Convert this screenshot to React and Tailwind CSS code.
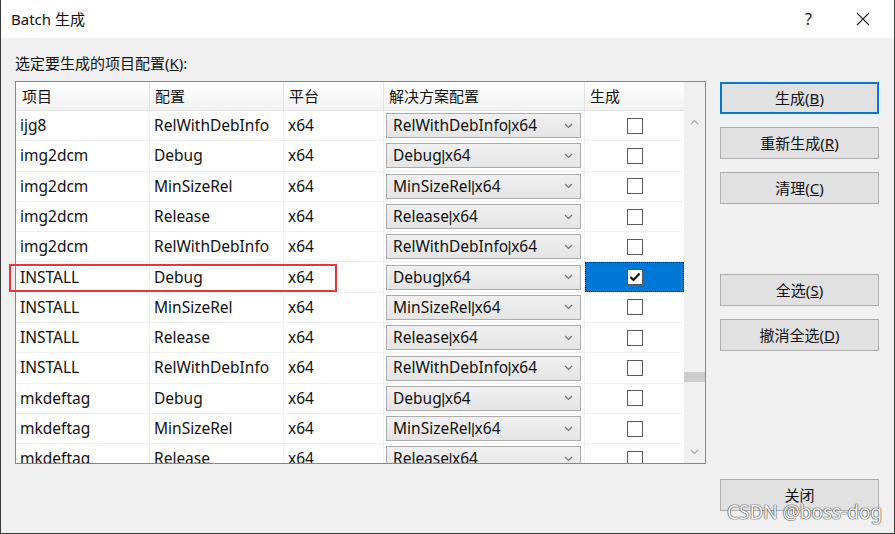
import React from "react";

const rows = [
  ["ijg8", "RelWithDebInfo"],
  ["img2dcm", "Debug"],
  ["img2dcm", "MinSizeRel"],
  ["img2dcm", "Release"],
  ["img2dcm", "RelWithDebInfo"],
  ["INSTALL", "Debug", true],
  ["INSTALL", "MinSizeRel"],
  ["INSTALL", "Release"],
  ["INSTALL", "RelWithDebInfo"],
  ["mkdeftag", "Debug"],
  ["mkdeftag", "MinSizeRel"],
  ["mkdeftag", "Release"],
];

const font = { fontFamily: '"Noto Sans", "Noto Sans CJK SC", sans-serif' };

function Chevron({ down = true, className = "" }) {
  return (
    <svg width="9" height="6" viewBox="0 0 9 6" className={className}>
      <path
        d={down ? "M1 1 L4.5 4.5 L8 1" : "M1 5 L4.5 1.5 L8 5"}
        fill="none"
        stroke="currentColor"
        strokeWidth="1.1"
      />
    </svg>
  );
}

function Checkbox({ checked }) {
  return (
    <div className="w-[16px] h-[16px] bg-white border border-[#5a5a5a] flex items-center justify-center">
      {checked && (
        <svg width="12" height="10" viewBox="0 0 12 10">
          <path d="M1.5 5 L4.5 8 L10.5 1.5" fill="none" stroke="#111" strokeWidth="2.2" />
        </svg>
      )}
    </div>
  );
}

function Btn({ children, primary, className = "" }) {
  return (
    <div
      className={
        "h-[32px] w-[159px] flex items-center justify-center bg-[#e1e1e1] text-[15px] text-[#111] " +
        (primary ? "border-2 border-[#0078d7] " : "border border-[#adadad] ") +
        className
      }
    >
      {children}
    </div>
  );
}

export default function App() {
  return (
    <div
      className="w-[895px] h-[534px] flex flex-col border-l border-r border-b border-[#3a3a3a] overflow-hidden relative"
      style={font}
    >
      {/* title bar */}
      <div className="h-[38px] bg-white flex items-center shrink-0">
        <span className="ml-[10px] text-[15px] text-[#111]">Batch 生成</span>
        <span className="ml-auto mr-[44px] text-[16px] text-[#222]">?</span>
        <svg width="14" height="14" viewBox="0 0 14 14" className="mr-[24px]">
          <path d="M1 1 L13 13 M13 1 L1 13" stroke="#222" strokeWidth="1.1" />
        </svg>
      </div>

      {/* body */}
      <div className="flex-1 bg-[#f0f0f0] pt-[14px] pl-[14px] relative">
        <div className="h-[22px] leading-[22px] text-[15px] text-[#111]">
          选定要生成的项目配置(<span className="underline">K</span>):
        </div>
        <div className="flex items-start mt-[7px]">
          {/* grid */}
          <div className="w-[691px] h-[383px] border border-[#828790] bg-white flex overflow-hidden">
            <div className="w-[668px] flex flex-col">
              <div className="h-[29px] shrink-0 flex bg-gradient-to-b from-white to-[#f2f2f2] border-b border-[#e3e3e3] text-[15px] text-[#111]">
                <div className="w-[134px] pl-[6px] border-r border-[#e3e3e3] flex items-center">项目</div>
                <div className="w-[134px] pl-[5px] border-r border-[#e3e3e3] flex items-center">配置</div>
                <div className="w-[100px] pl-[5px] border-r border-[#e3e3e3] flex items-center">平台</div>
                <div className="w-[201px] pl-[5px] border-r border-[#e3e3e3] flex items-center">解决方案配置</div>
                <div className="w-[99px] pl-[5px] flex items-center">生成</div>
              </div>
              {rows.map(([p, c, sel], i) => (
                <div key={i} className="h-[30.3px] shrink-0 flex border-b border-[#f0f0f0] text-[15.5px] text-[#111]">
                  <div className="w-[134px] pl-[4px] border-r border-[#f0f0f0] flex items-center">{p}</div>
                  <div className="w-[134px] pl-[4px] border-r border-[#f0f0f0] flex items-center">{c}</div>
                  <div className="w-[100px] pl-[4px] border-r border-[#f0f0f0] flex items-center">x64</div>
                  <div className="w-[201px] pl-[2px] border-r border-[#f0f0f0] flex items-center">
                    <div className="w-[195px] h-[25px] border border-[#acacac] bg-gradient-to-b from-[#f0f0f0] to-[#e5e5e5] flex items-center pl-[6px] pr-[7px]">
                      <span>
                        {c}
                        <span className="font-['Liberation_Sans'] mx-[-0.5px]">|</span>
                        x64
                      </span>
                      <Chevron className="ml-auto text-[#707070]" />
                    </div>
                  </div>
                  <div
                    className={
                      "w-[99px] flex items-center justify-center " +
                      (sel ? "bg-[#0078d7] outline-1 outline-dotted outline-black -outline-offset-1" : "")
                    }
                  >
                    <Checkbox checked={sel} />
                  </div>
                </div>
              ))}
            </div>
            {/* scrollbar */}
            <div className="w-[21px] bg-[#f0f0f0] flex flex-col items-center relative text-[#a8a8a8]">
              <Chevron down={false} className="mt-[37px]" />
              <div className="mt-[247px] w-[21px] h-[10px] bg-[#cdcdcd]" />
              <Chevron className="mt-auto mb-[8px]" />
            </div>
          </div>

          {/* buttons */}
          <div className="ml-[14px] pt-[1px] flex flex-col">
            <Btn primary>生成(<span className="underline">B</span>)</Btn>
            <Btn className="mt-[13px]">重新生成(<span className="underline">R</span>)</Btn>
            <Btn className="mt-[13px]">清理(<span className="underline">C</span>)</Btn>
            <Btn className="mt-[70px]">全选(<span className="underline">S</span>)</Btn>
            <Btn className="mt-[13px]">撤消全选(<span className="underline">D</span>)</Btn>
            <Btn className="mt-[128px]">关闭</Btn>
          </div>
        </div>

        {/* red annotation box */}
        <div className="absolute left-[8px] top-[226px] w-[328px] h-[28px] border-2 border-[#e8353b]" />

        {/* watermark */}
        <div className="absolute left-[726px] top-[462px] text-[19px] leading-[24px] text-[#f4f4f4] [text-shadow:0_0_1px_#444,0_0_1px_#444,0_0_1px_#444]">
          CSDN @boss-dog
        </div>
      </div>
    </div>
  );
}
